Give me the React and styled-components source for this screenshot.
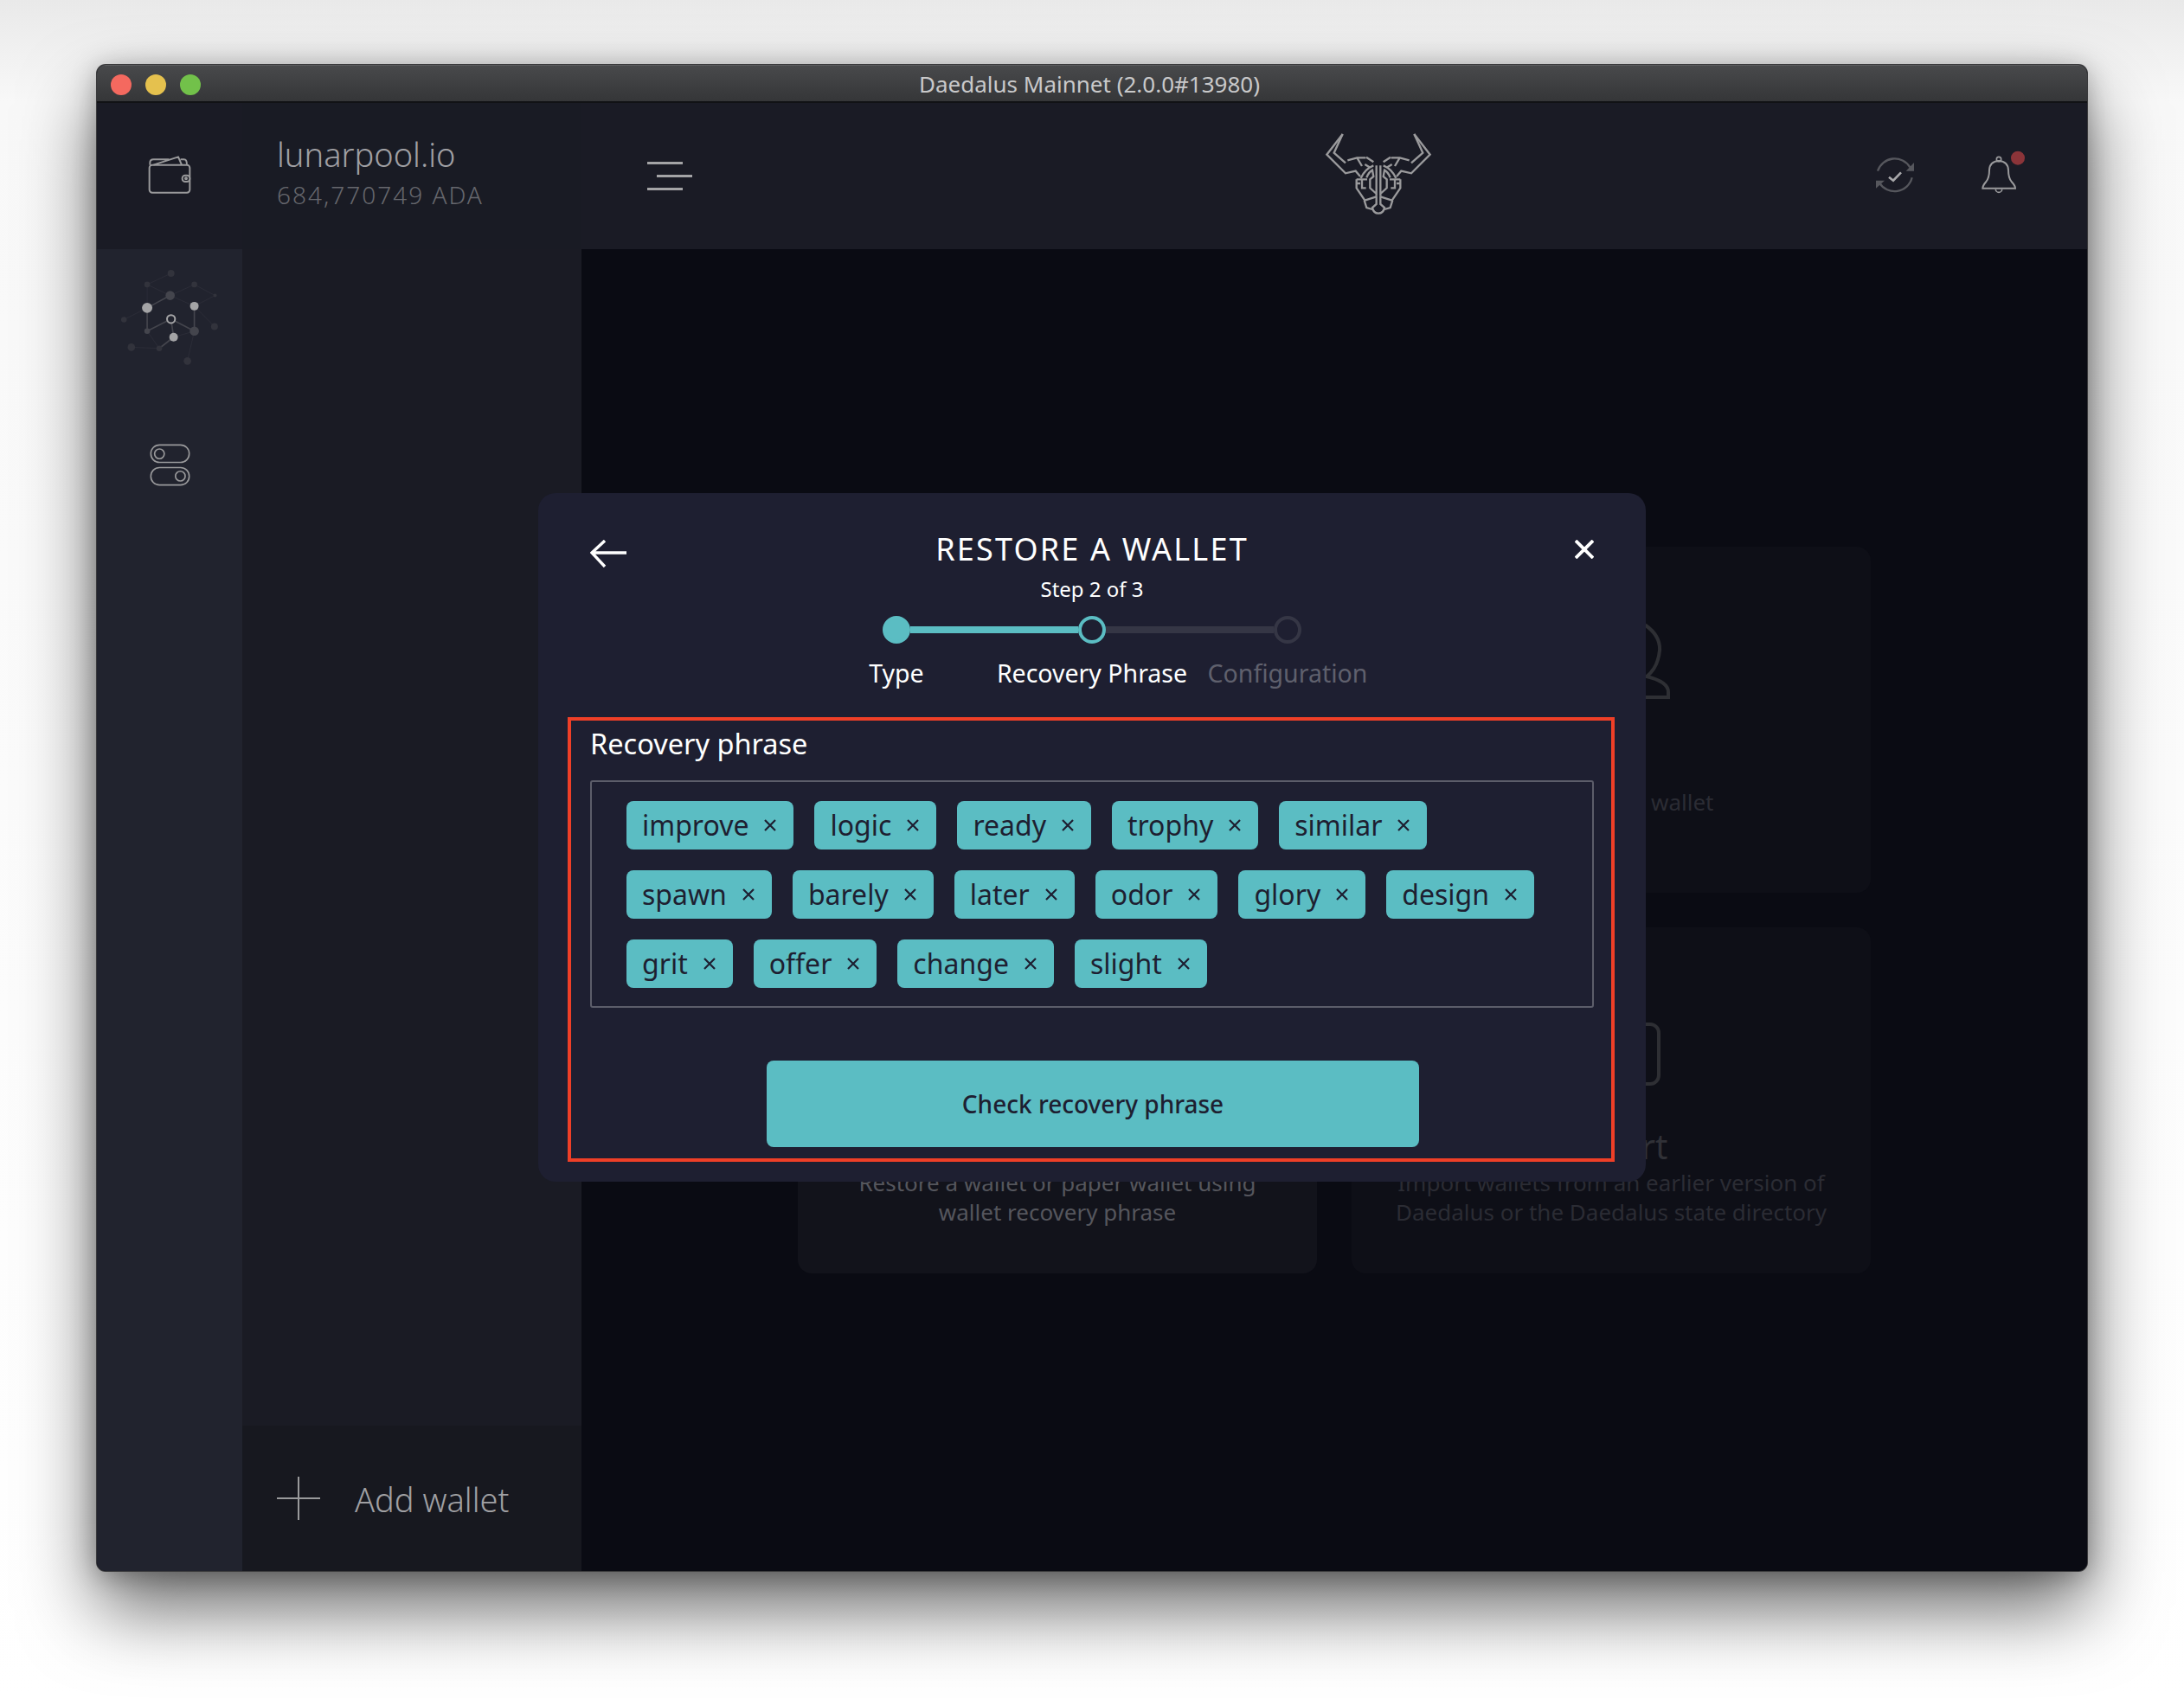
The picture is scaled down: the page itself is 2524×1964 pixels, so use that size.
import React from 'react'
import styled, { createGlobalStyle } from 'styled-components'

const GlobalStyle = createGlobalStyle`
  html, body {
    margin: 0;
    background: #fff;
    font-family: 'Noto Sans', sans-serif;
  }
  * { box-sizing: border-box; }
`

const Page = styled.div`
  width: 2524px;
  height: 1964px;
  padding: 75px 0 0 112px;
  background: linear-gradient(#e9e9e9, #f8f8f8 6%, #fff);
  overflow: hidden;
`

const Window = styled.div`
  position: relative;
  width: 2300px;
  height: 1741px;
  display: flex;
  flex-direction: column;
  border-radius: 10px;
  overflow: hidden;
  background: #0a0b13;
  box-shadow: 0 0 0 1px #3a3a3c, 0 44px 86px rgba(0, 0, 0, 0.58), 0 4px 30px rgba(0, 0, 0, 0.3);
`

const TitleBar = styled.div`
  position: relative;
  height: 44px;
  flex: none;
  display: flex;
  align-items: center;
  justify-content: center;
  padding-right: 6px;
  background: linear-gradient(#48494b, #353638);
  border-top: 1px solid #5c5d5f;
  border-bottom: 2px solid #111215;
  color: #c9c9ca;
  font-size: 26px;
  line-height: 44px;
`

const Lights = styled.div`
  position: absolute;
  left: 16px;
  top: 10px;
  display: flex;
  gap: 16px;
`

const Light = styled.span`
  width: 24px;
  height: 24px;
  border-radius: 50%;
  background: ${({ $color }) => $color};
`

const Header = styled.header`
  height: 169px;
  flex: none;
  display: flex;
  align-items: center;
  background: #1a1b25;
`

const HeaderIconCell = styled.div`
  width: 168px;
  display: flex;
  justify-content: center;
`

const WalletCell = styled.div`
  width: 392px;
  height: 100%;
  padding: 34px 0 0 40px;
  background: #191b24;
`

const WalletName = styled.div`
  color: #a0a0a4;
  font-size: 38px;
  font-weight: 300;
  line-height: 50px;
`

const WalletAmount = styled.div`
  margin-top: 3px;
  color: #66676d;
  font-size: 28px;
  font-weight: 300;
  letter-spacing: 2px;
  line-height: 38px;
`

const Bar = styled.div`
  flex: 1;
  height: 100%;
  display: flex;
  align-items: center;
  padding: 0 62px 0 76px;
`

const MenuIcon = styled.div`
  width: 52px;
  display: flex;
  flex-direction: column;
  gap: 12px;
  margin-right: 700px;
`

const MenuLine = styled.span`
  display: block;
  width: 41px;
  height: 3px;
  margin-left: ${({ $shift }) => ($shift ? '11px' : '0')};
  background: #a4a4a6;
`

const StatusIcons = styled.div`
  margin-left: auto;
  display: flex;
  gap: 30px;
  padding-top: 2px;
`

const Body = styled.div`
  flex: 1;
  display: flex;
  min-height: 0;
`

const Sidebar = styled.aside`
  width: 168px;
  flex: none;
  display: flex;
  flex-direction: column;
  align-items: center;
  gap: 90px;
  padding-top: 22px;
  background: #21232e;
`

const WalletPane = styled.div`
  width: 392px;
  flex: none;
  display: flex;
  flex-direction: column;
  justify-content: flex-end;
  background: #1a1b24;
`

const AddWallet = styled.div`
  height: 168px;
  display: flex;
  align-items: center;
  gap: 40px;
  padding-left: 40px;
  background: #17181f;
  color: #a0a0a3;
  font-size: 38px;
  font-weight: 300;
`

const AddWalletLabel = styled.span`
  padding-top: 2px;
`

const Main = styled.main`
  flex: 1;
  display: flex;
  align-items: center;
  justify-content: center;
  background: #0a0b13;
`

const CardGrid = styled.div`
  display: grid;
  grid-template-columns: 600px 600px;
  grid-auto-rows: 400px;
  gap: 40px;
`

const Card = styled.div`
  display: flex;
  flex-direction: column;
  align-items: center;
  padding-top: 68px;
  border-radius: 16px;
  text-align: center;
  background: ${({ $bright }) => ($bright ? '#12131b' : '#0e0f17')};
  color: ${({ $bright }) => ($bright ? '#55565d' : '#2b2c34')};
`

const CardIcon = styled.svg`
  width: 160px;
  height: 120px;
  flex: none;
`

const CardTitle = styled.div`
  margin-top: 40px;
  color: ${({ $bright }) => ($bright ? '#55565d' : '#303137')};
  font-size: 40px;
  line-height: 50px;
`

const CardText = styled.div`
  width: 510px;
  font-size: 26px;
  line-height: 34px;
`

const Overlay = styled.div`
  position: absolute;
  left: 0;
  right: 0;
  top: 44px;
  bottom: 0;
  display: flex;
  align-items: center;
  justify-content: center;
`

const Modal = styled.div`
  position: relative;
  width: 1280px;
  height: 796px;
  display: flex;
  flex-direction: column;
  align-items: center;
  padding-top: 40px;
  border-radius: 20px;
  background: #1e1f31;
  color: #fff;
`

const BackButton = styled.svg`
  position: absolute;
  left: 60px;
  top: 54px;
  width: 42px;
  height: 32px;
`

const CloseButton = styled.svg`
  position: absolute;
  left: 1198px;
  top: 54px;
  width: 22px;
  height: 22px;
`

const ModalTitle = styled.h1`
  margin: 0;
  font-size: 36px;
  font-weight: 400;
  letter-spacing: 2.2px;
  line-height: 50px;
`

const StepCount = styled.div`
  margin-top: 4px;
  font-size: 24px;
  line-height: 34px;
`

const Track = styled.div`
  margin-top: 14px;
  display: flex;
  align-items: center;
`

const Dot = styled.span`
  width: 32px;
  height: 32px;
  flex: none;
  border-radius: 50%;
  background: ${({ $state }) => ($state === 'done' ? '#5bbdc3' : 'transparent')};
  border: 4px solid ${({ $state }) => ($state === 'todo' ? '#353645' : '#5bbdc3')};
`

const TrackBar = styled.span`
  width: 194px;
  height: 8px;
  background: ${({ $on }) => ($on ? '#5bbdc3' : '#353645')};
`

const StepLabels = styled.div`
  margin-top: 14px;
  display: grid;
  grid-template-columns: repeat(3, 226px);
  justify-items: center;
`

const StepLabel = styled.span`
  color: ${({ $muted }) => ($muted ? '#5f606d' : '#fff')};
  font-size: 28.5px;
  line-height: 40px;
  white-space: nowrap;
`

const Highlight = styled.section`
  align-self: flex-start;
  width: 1210px;
  height: 514px;
  margin: 31px 0 0 34px;
  padding: 7px 20px 0 22px;
  display: flex;
  flex-direction: column;
  border: 4px solid #ef3f27;
`

const FieldLabel = styled.label`
  font-size: 32.5px;
  line-height: 40px;
`

const TagInput = styled.div`
  height: 263px;
  margin-top: 22px;
  padding: 22px 40px;
  display: flex;
  flex-wrap: wrap;
  align-content: flex-start;
  gap: 24px;
  border: 2px solid #5c5d6a;
  border-radius: 3px;
`

const Tag = styled.span`
  height: 56px;
  display: inline-flex;
  align-items: center;
  padding: 0 20px 0 18px;
  border-radius: 8px;
  background: #5bbdc3;
  color: #1e1f31;
  font-size: 32px;
  line-height: 56px;
`

const TagClose = styled.svg`
  width: 14px;
  height: 14px;
  margin-left: 18px;
`

const SubmitButton = styled.button`
  width: 754px;
  height: 100px;
  flex: none;
  margin: 61px 0 0 204px;
  border: 0;
  border-radius: 8px;
  background: #5bbdc3;
  color: #1e1f31;
  font-family: inherit;
  font-size: 28px;
  font-weight: 500;
`

const rows = [
  ['improve', 'logic', 'ready', 'trophy', 'similar'],
  ['spawn', 'barely', 'later', 'odor', 'glory', 'design'],
  ['grit', 'offer', 'change', 'slight'],
]

const nodesBright = [[180, 228, 18], [344, 222, 15], [272, 330, 15]]
const nodesMid = [[260, 185, 16], [344, 309, 16], [180, 309, 10]]
const nodesDim = [
  [263, 108, 12], [180, 147, 10], [344, 147, 10], [416, 185, 6], [99, 269, 10],
  [414, 293, 12], [125, 365, 13], [222, 369, 10], [320, 413, 13],
]
const edgesMid = [
  [180, 228, 260, 185], [180, 228, 180, 309], [180, 309, 263, 267], [263, 267, 344, 309],
  [344, 222, 344, 309], [263, 267, 272, 330], [272, 330, 222, 369],
]
const edgesDim = [
  [180, 147, 263, 108], [180, 147, 180, 228], [180, 147, 260, 185], [260, 185, 344, 147],
  [344, 147, 416, 185], [260, 185, 344, 222], [344, 222, 416, 185], [344, 222, 414, 293],
  [99, 269, 180, 228], [180, 309, 222, 369], [222, 369, 125, 365], [344, 309, 320, 413],
  [272, 330, 344, 309],
]

const NetworkIcon = () => (
  <svg width="112" height="113" viewBox="90 90 336 340">
    {edgesDim.map(([a, b, c, d], i) => (
      <line key={i} x1={a} y1={b} x2={c} y2={d} stroke="#2b2c37" strokeWidth="3" />
    ))}
    {edgesMid.map(([a, b, c, d], i) => (
      <line key={i} x1={a} y1={b} x2={c} y2={d} stroke="#44454d" strokeWidth="5" />
    ))}
    {nodesDim.map(([x, y, r], i) => <circle key={i} cx={x} cy={y} r={r} fill="#32333c" />)}
    {nodesMid.map(([x, y, r], i) => <circle key={i} cx={x} cy={y} r={r} fill="#44454d" />)}
    {nodesBright.map(([x, y, r], i) => <circle key={i} cx={x} cy={y} r={r} fill="#a4a4a6" />)}
    <circle cx="263" cy="267" r="14" fill="#21232e" stroke="#a4a4a6" strokeWidth="6" />
  </svg>
)

const ToggleIcon = () => (
  <svg width="47" height="49" viewBox="187 700 142 148" fill="none" stroke="#99999b" strokeWidth="5">
    <rect x="191" y="704" width="134" height="61" rx="30" />
    <circle cx="221" cy="735" r="17" />
    <rect x="191" y="783" width="134" height="61" rx="30" />
    <circle cx="294" cy="813" r="17" />
  </svg>
)

const WalletIcon = () => (
  <svg width="72" height="67" viewBox="0 0 216 201" fill="none" stroke="#99999b" strokeWidth="6" strokeLinejoin="round">
    <rect x="38" y="62" width="140" height="96" rx="10" />
    <path d="M40 62 V54 Q40 43 52 43 H106 M52 62 L138 34 L150 62 M146 43 H158 Q168 43 168 62" />
    <rect x="152" y="98" width="26" height="22" rx="10" fill="#191b24" />
    <circle cx="165" cy="109" r="3" />
  </svg>
)

// left half of the logo, mirrored around x=279
const LogoHalf = () => (
  <g>
    <path d="M155 75 L100 146 L165 211 L200 203 L216 222" />
    <path d="M155 75 L125 140 L165 175" />
    <path d="M172 166 L205 157 L235 157 M205 157 L222 186 M237 155 L262 172 M232 180 L248 190" />
    <path d="M218 228 Q232 196 262 184 M272 184 V290 M238 226 Q246 206 258 200 L262 222 L250 232 V262 L272 282" />
    <path d="M203 232 H240 M222 232 V262 H236 M203 232 V262 L232 305 L272 292 M216 246 H206" />
    <path d="M230 305 L238 330 L258 336 M272 290 V318 L258 330 Q262 350 279 350" />
  </g>
)

const Logo = () => (
  <svg width="200" height="147" viewBox="0 0 600 441" fill="none" stroke="#9a9a9c" strokeWidth="7">
    <LogoHalf />
    <g transform="translate(558 0) scale(-1 1)">
      <LogoHalf />
    </g>
  </svg>
)

const SyncIcon = () => (
  <svg width="90" height="77" viewBox="0 0 270 231" fill="none">
    <path d="M60 95 A62 62 0 0 1 172 82 M179 118 A62 62 0 0 1 66 136" stroke="#56575d" strokeWidth="7" />
    <path d="M186 66 V95 H158 Z M54 155 V128 H84 Z" fill="#56575d" />
    <path d="M99 116 L114 128 L141 100" stroke="#a8a8aa" strokeWidth="8" />
  </svg>
)

const BellIcon = () => (
  <svg width="80" height="77" viewBox="360 0 240 231" fill="none">
    <path d="M424 155 Q424 146 436 132 Q447 118 447 92 Q448 62 480 60 Q512 62 513 92 Q513 118 524 132 Q537 146 537 155 Z" stroke="#9a9a9c" strokeWidth="6" />
    <circle cx="480" cy="54" r="8" stroke="#9a9a9c" strokeWidth="5" />
    <path d="M469 158 A11 11 0 1 0 491 158" stroke="#9a9a9c" strokeWidth="5" />
    <circle cx="546" cy="50" r="24" fill="#8b3439" />
  </svg>
)

const PlusIcon = () => (
  <svg width="50" height="50" viewBox="0 0 50 50" stroke="#99999b" strokeWidth="2">
    <path d="M0 25 H50 M25 0 V50" />
  </svg>
)

const App = () => (
  <>
    <GlobalStyle />
    <Page>
      <Window>
        <TitleBar>
          <Lights>
            <Light $color="#f4695f" />
            <Light $color="#e5c14e" />
            <Light $color="#72c14a" />
          </Lights>
          Daedalus Mainnet (2.0.0#13980)
        </TitleBar>
        <Header>
          <HeaderIconCell>
            <WalletIcon />
          </HeaderIconCell>
          <WalletCell>
            <WalletName>lunarpool.io</WalletName>
            <WalletAmount>684,770749 ADA</WalletAmount>
          </WalletCell>
          <Bar>
            <MenuIcon>
              <MenuLine />
              <MenuLine $shift />
              <MenuLine />
            </MenuIcon>
            <Logo />
            <StatusIcons>
              <SyncIcon />
              <BellIcon />
            </StatusIcons>
          </Bar>
        </Header>
        <Body>
          <Sidebar>
            <NetworkIcon />
            <ToggleIcon />
          </Sidebar>
          <WalletPane>
            <AddWallet>
              <PlusIcon />
              <AddWalletLabel>Add wallet</AddWalletLabel>
            </AddWallet>
          </WalletPane>
          <Main>
            <CardGrid>
              {/* first card sits fully behind the dialog */}
              <Card $bright />
              <Card>
                <CardIcon viewBox="1782 700 160 120" fill="none" stroke="#2e2f34" strokeWidth="4">
                  <path d="M1902 723 Q1919 735 1918 752 Q1916 772 1903 782 Q1928 788 1928 800 V806 H1796 V800 Q1796 788 1821 782 Q1806 772 1806 752 Q1805 735 1822 723 Q1862 700 1902 723 Z" />
                </CardIcon>
                <CardTitle>Join</CardTitle>
                <CardText>Join a shared wallet</CardText>
              </Card>
              <Card $bright>
                <CardIcon viewBox="0 0 160 120" />
                <CardTitle $bright>Restore</CardTitle>
                <CardText>Restore a wallet or paper wallet using wallet recovery phrase</CardText>
              </Card>
              <Card>
                <CardIcon viewBox="1782 1140 160 120" fill="none" stroke="#2e2f34" strokeWidth="4">
                  <rect x="1807" y="1184" width="110" height="69" rx="10" />
                </CardIcon>
                <CardTitle>Import</CardTitle>
                <CardText>Import wallets from an earlier version of Daedalus or the Daedalus state directory</CardText>
              </Card>
            </CardGrid>
          </Main>
        </Body>
        <Overlay>
          <Modal>
            <BackButton viewBox="0 0 42 32" fill="none" stroke="#fff" strokeWidth="3.4">
              <path d="M42 15 H3 M17 1 L2 15 L17 31" />
            </BackButton>
            <CloseButton viewBox="0 0 22 22" stroke="#fff" strokeWidth="3.8">
              <path d="M1 1 L21 21 M21 1 L1 21" />
            </CloseButton>
            <ModalTitle>RESTORE A WALLET</ModalTitle>
            <StepCount>Step 2 of 3</StepCount>
            <Track>
              <Dot $state="done" />
              <TrackBar $on />
              <Dot $state="current" />
              <TrackBar />
              <Dot $state="todo" />
            </Track>
            <StepLabels>
              <StepLabel>Type</StepLabel>
              <StepLabel>Recovery Phrase</StepLabel>
              <StepLabel $muted>Configuration</StepLabel>
            </StepLabels>
            <Highlight>
              <FieldLabel>Recovery phrase</FieldLabel>
              <TagInput>
                {rows.flat().map((word) => (
                  <Tag key={word}>
                    {word}
                    <TagClose viewBox="0 0 14 14" stroke="#1e1f31" strokeWidth="2.2">
                      <path d="M1 1 L13 13 M13 1 L1 13" />
                    </TagClose>
                  </Tag>
                ))}
              </TagInput>
              <SubmitButton>Check recovery phrase</SubmitButton>
            </Highlight>
          </Modal>
        </Overlay>
      </Window>
    </Page>
  </>
)

export default App
